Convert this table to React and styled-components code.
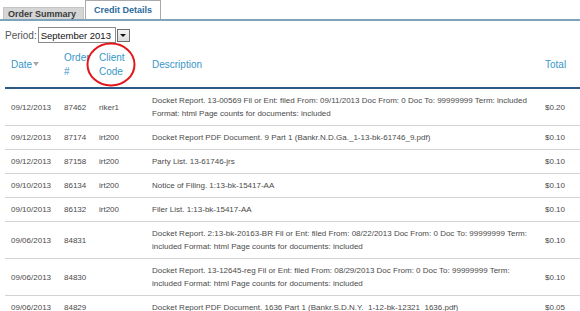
import React from "react";
import styled, { createGlobalStyle } from "styled-components";

const Global = createGlobalStyle`
  html, body { margin: 0; padding: 0; background: #fff; }
  body { font-family: "Liberation Sans", Arial, sans-serif; overflow: hidden; }
`;

const Page = styled.div`
  position: relative;
  width: 580px;
  height: 311px;
  overflow: hidden;
`;

const TabBar = styled.div`
  display: flex;
  align-items: flex-end;
  height: 19px;
  padding-left: 3px;
  border-bottom: 2px solid #7ea4bd;
`;

const Tab = styled.div`
  display: flex;
  align-items: center;
  box-sizing: border-box;
  height: ${(p) => (p.$active ? "19px" : "12px")};
  margin-left: ${(p) => (p.$active ? "1px" : "0")};
  padding: ${(p) => (p.$active ? "0 8px 1px 8px" : "0 7px 0 4px")};
  background: ${(p) => (p.$active ? "#fff" : "#d5d5d5")};
  border: 1px solid ${(p) => (p.$active ? "#a9a9a9" : "#c4c4c4")};
  border-bottom: none;
  font-size: 9px;
  font-weight: bold;
  color: ${(p) => (p.$active ? "#2a6a9c" : "#3a3a3a")};
  white-space: nowrap;
`;

const PeriodRow = styled.div`
  display: flex;
  align-items: center;
  margin: 6px 0 0 5px;
  height: 16px;
`;

const PeriodLabel = styled.span`
  font-size: 10px;
  color: #555;
  margin-right: 1px;
`;

const SelectBox = styled.div`
  display: flex;
  align-items: center;
  box-sizing: border-box;
  width: 78px;
  height: 16px;
  padding-left: 2px;
  border: 1px solid #8a8a8a;
  font-size: 9.5px;
  color: #111;
  white-space: nowrap;
  overflow: hidden;
`;

const SelectButton = styled.div`
  display: flex;
  align-items: center;
  justify-content: center;
  box-sizing: border-box;
  width: 13px;
  height: 13px;
  margin-left: 1px;
  border: 1px solid #6e6e6e;
  background: linear-gradient(#f4f4f4, #dcdcdc);
`;

const DownTri = styled.span`
  width: 0;
  height: 0;
  border-left: 3px solid transparent;
  border-right: 3px solid transparent;
  border-top: 3px solid #111;
`;

const Table = styled.table`
  margin: 2px 0 0 5px;
  width: 590px;
  table-layout: fixed;
  border-collapse: collapse;
`;

const Th = styled.th`
  text-align: left;
  vertical-align: middle;
  font-weight: normal;
  font-size: 10px;
  line-height: 14px;
  color: #3797c9;
  padding: 6px 0 8px 6px;
  border-bottom: 2px solid #2d5b86;
  white-space: nowrap;
`;

const SortArrow = styled.span`
  display: inline-block;
  width: 0;
  height: 0;
  margin-left: 1px;
  vertical-align: 2px;
  border-left: 3.5px solid transparent;
  border-right: 3.5px solid transparent;
  border-top: 4px solid #a8a8a8;
`;

const Tr = styled.tr`
  border-bottom: 1px solid #d2d2d2;
`;

const Td = styled.td`
  vertical-align: middle;
  font-size: 8px;
  line-height: 13px;
  color: #4a4a4a;
  padding: 5px 0 5px 6px;
  white-space: nowrap;
  overflow: hidden;
`;

const Line = styled.div`
  white-space: nowrap;
`;

const Circle = styled.svg`
  position: absolute;
  left: 85px;
  top: 41px;
  width: 52px;
  height: 47px;
  pointer-events: none;
`;

const rows = [
  {
    date: "09/12/2013",
    order: "87462",
    client: "riker1",
    desc: [
      "Docket Report. 13-00569 Fil or Ent: filed From: 09/11/2013 Doc From: 0 Doc To: 99999999 Term: included",
      "Format: html Page counts for documents: included",
    ],
    total: "$0.20",
  },
  {
    date: "09/12/2013",
    order: "87174",
    client: "irt200",
    desc: ["Docket Report PDF Document. 9 Part 1 (Bankr.N.D.Ga._1-13-bk-61746_9.pdf)"],
    total: "$0.10",
  },
  {
    date: "09/12/2013",
    order: "87158",
    client: "irt200",
    desc: ["Party List. 13-61746-jrs"],
    total: "$0.10",
  },
  {
    date: "09/10/2013",
    order: "86134",
    client: "irt200",
    desc: ["Notice of Filing. 1:13-bk-15417-AA"],
    total: "$0.10",
  },
  {
    date: "09/10/2013",
    order: "86132",
    client: "irt200",
    desc: ["Filer List. 1:13-bk-15417-AA"],
    total: "$0.10",
  },
  {
    date: "09/06/2013",
    order: "84831",
    client: "",
    desc: [
      "Docket Report. 2:13-bk-20163-BR Fil or Ent: filed From: 08/22/2013 Doc From: 0 Doc To: 99999999 Term:",
      "included Format: html Page counts for documents: included",
    ],
    total: "$0.10",
  },
  {
    date: "09/06/2013",
    order: "84830",
    client: "",
    desc: [
      "Docket Report. 13-12645-reg Fil or Ent: filed From: 08/29/2013 Doc From: 0 Doc To: 99999999 Term:",
      "included Format: html Page counts for documents: included",
    ],
    total: "$0.10",
  },
  {
    date: "09/06/2013",
    order: "84829",
    client: "",
    desc: ["Docket Report PDF Document. 1636 Part 1 (Bankr.S.D.N.Y._1-12-bk-12321_1636.pdf)"],
    total: "$0.05",
  },
];

export default function App() {
  return (
    <>
      <Global />
      <Page>
        <TabBar>
          <Tab>Order Summary</Tab>
          <Tab $active>Credit Details</Tab>
        </TabBar>
        <PeriodRow>
          <PeriodLabel>Period:</PeriodLabel>
          <SelectBox>September 2013</SelectBox>
          <SelectButton>
            <DownTri />
          </SelectButton>
        </PeriodRow>
        <Table>
          <colgroup>
            <col style={{ width: 53 }} />
            <col style={{ width: 35 }} />
            <col style={{ width: 53 }} />
            <col style={{ width: 393 }} />
            <col style={{ width: 56 }} />
          </colgroup>
          <thead>
            <tr>
              <Th>
                Date
                <SortArrow />
              </Th>
              <Th>
                Order
                <br />#
              </Th>
              <Th>
                Client
                <br />
                Code
              </Th>
              <Th>Description</Th>
              <Th>Total</Th>
            </tr>
          </thead>
          <tbody>
            {rows.map((r) => (
              <Tr key={r.order}>
                <Td>{r.date}</Td>
                <Td>{r.order}</Td>
                <Td>{r.client}</Td>
                <Td>
                  {r.desc.map((l, i) => (
                    <Line key={i}>{l}</Line>
                  ))}
                </Td>
                <Td>{r.total}</Td>
              </Tr>
            ))}
          </tbody>
        </Table>
        <Circle viewBox="0 0 52 47">
          <ellipse cx="26" cy="23.5" rx="23.5" ry="21" fill="none" stroke="#e3161c" strokeWidth="2" />
        </Circle>
      </Page>
    </>
  );
}
